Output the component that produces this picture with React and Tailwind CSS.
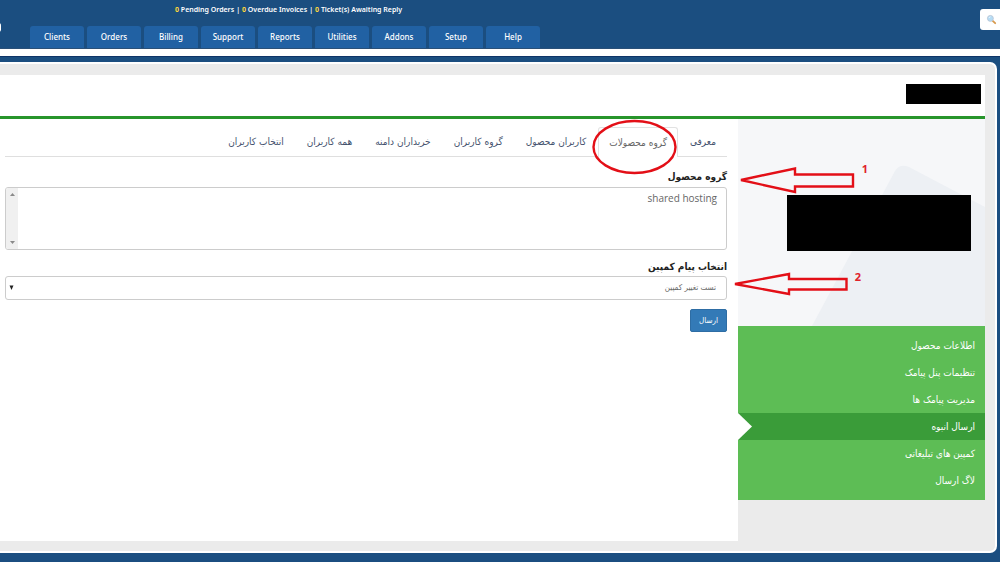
const NAV = ["Clients", "Orders", "Billing", "Support", "Reports", "Utilities", "Addons", "Setup", "Help"];

const TABS = [
  "معرفی",
  "گروه محصولات",
  "کاربران محصول",
  "گروه کاربران",
  "خریداران دامنه",
  "همه کاربران",
  "انتخاب کاربران",
];

const MENU = [
  "اطلاعات محصول",
  "تنظیمات پنل پیامک",
  "مدیریت پیامک ها",
  "ارسال انبوه",
  "کمپین های تبلیغاتی",
  "لاگ ارسال",
];

function Stat({ label }) {
  return (
    <a href="#stats" className="hover:underline">
      <span className="font-bold text-[#ffd83a]">0</span> {label}
    </a>
  );
}

function Header() {
  return (
    <header className="relative flex h-[49px] flex-col justify-between overflow-hidden border-b border-[#2a5078] bg-[#1b4e80]">
      <div className="flex gap-[2px] pl-[175px] pt-1 font-['Noto_Sans',sans-serif] text-[7px] leading-[12px] font-semibold text-white">
        <Stat label="Pending Orders" />
        <span>|</span>
        <Stat label="Overdue Invoices" />
        <span>|</span>
        <Stat label="Ticket(s) Awaiting Reply" />
      </div>
      <span className="absolute -left-1 top-[23px] h-[9px] w-[5px] rounded-full bg-white" />
      <nav className="flex gap-[3px] pl-[30px]">
        {NAV.map((item) => (
          <a
            key={item}
            href="#nav"
            className="flex h-[22px] w-[54px] items-center justify-center rounded-t-[3px] bg-[#2161a3] font-['Noto_Sans',sans-serif] text-[8px] font-medium text-white"
          >
            {item}
          </a>
        ))}
      </nav>
      <button
        type="button"
        aria-label="Search"
        className="absolute -right-1 top-[9px] flex h-[21px] w-6 items-center rounded-[3px] bg-white pl-[6px]"
      >
        <svg viewBox="0 0 12 12" className="h-[11px] w-[11px]">
          <path d="M7 7.2 10 10" stroke="#d79a4e" strokeWidth="2" strokeLinecap="round" />
          <circle cx="4.8" cy="4.8" r="3.2" fill="#b5dcf5" stroke="#b9c6d6" strokeWidth="1" />
          <path d="M3.2 4.4a2 2 0 0 1 1.6-1.3" stroke="#fff" strokeWidth=".8" fill="none" />
        </svg>
      </button>
    </header>
  );
}

function Tabs() {
  return (
    <div role="tablist" className="flex gap-px border-b border-[#dfdfdf]">
      {TABS.map((tab, i) => (
        <button
          key={tab}
          type="button"
          role="tab"
          aria-selected={i === 1}
          className={
            i === 1
              ? "-mb-px h-[30px] rounded-t-[3px] border border-b-0 border-[#e2e2e2] bg-white px-[10px] text-[10px] whitespace-nowrap text-[#666666]"
              : "h-[29px] px-[11px] text-[10px] whitespace-nowrap text-[#45526e]"
          }
        >
          {tab}
        </button>
      ))}
    </div>
  );
}

function Form() {
  return (
    <form className="flex flex-col items-start" onSubmit={(e) => e.preventDefault()}>
      <label htmlFor="group" className="mt-[13px] text-[10px] leading-[14px] font-bold text-[#222222]">
        گروه محصول
      </label>
      <div className="mt-[3px] flex h-[63px] w-full overflow-hidden rounded-[3px] border border-[#cccccc] bg-white">
        <select
          id="group"
          multiple
          className="h-full flex-1 appearance-none overflow-hidden bg-transparent py-[3px] pr-[9px] font-['Open_Sans',sans-serif] text-[10px] leading-[16px] text-[#666666] outline-none"
        >
          <option className="p-0 text-right">shared hosting</option>
        </select>
        <div className="flex w-[12px] flex-col items-center justify-between bg-[#f0f0f0] py-[5px]">
          <svg viewBox="0 0 5 3" className="h-[3px] w-[5px]"><path d="M0 3 2.5 0 5 3z" fill="#8a8a8a" /></svg>
          <svg viewBox="0 0 5 3" className="h-[3px] w-[5px]"><path d="M0 0 2.5 3 5 0z" fill="#8a8a8a" /></svg>
        </div>
      </div>
      <label htmlFor="message" className="mt-[10px] text-[10px] leading-[14px] font-bold text-[#222222]">
        انتخاب پیام کمپین
      </label>
      <div className="relative mt-[2px] w-full">
        <select
          id="message"
          className="block h-[24px] w-full appearance-none rounded-[3px] border border-[#cccccc] bg-white pr-[10px] text-[8px] text-[#666666]"
        >
          <option>تست تغییر کمپین</option>
        </select>
        <svg viewBox="0 0 5 5" className="pointer-events-none absolute left-[4px] top-[9px] h-[5px] w-[5px]">
          <path d="M.5 .5h4L2.5 5z" fill="#222" />
        </svg>
      </div>
      <button
        type="submit"
        className="mt-[9px] h-[23px] w-[37px] rounded-[2px] border border-[#2e6da4] bg-[#337ab7] text-[8px] text-white"
      >
        ارسال
      </button>
    </form>
  );
}

function Sidebar() {
  return (
    <aside className="w-[247px] shrink-0 bg-[#ebebeb]">
      <div className="relative flex h-[207px] items-center justify-center overflow-hidden bg-[#f6f7f9]">
        <svg viewBox="0 0 247 207" className="absolute inset-0 h-full w-full">
          <path d="M74 207 157 52q5-8 14-4L247 88V207z" fill="#edf0f4" />
        </svg>
        <div className="relative ml-[34px] h-[56px] w-[184px] bg-black" />
      </div>
      <nav className="bg-[#5dbd55] py-[6px]">
        {MENU.map((item, i) => (
          <a
            key={item}
            href="#menu"
            className={
              i === 3
                ? "relative flex h-[27px] items-center bg-[#3a9c39] px-[10px] text-[10px] text-white"
                : "flex h-[27px] items-center px-[10px] text-[10px] text-white"
            }
          >
            {item}
            {i === 3 && (
              <svg viewBox="0 0 14 27" className="absolute left-0 top-0 h-[27px] w-[14px]">
                <path d="M0 0 14 13.5 0 27z" fill="#fff" />
              </svg>
            )}
          </a>
        ))}
      </nav>
    </aside>
  );
}

function Annotations() {
  return (
    <div className="pointer-events-none absolute inset-0" dir="ltr">
      <svg className="absolute right-[323px] top-[119px] h-[56px] w-[85px]" viewBox="0 0 85 56" fill="none">
        <ellipse cx="42.5" cy="28" rx="41" ry="26" stroke="#e30f17" strokeWidth="2.4" />
      </svg>
      <svg className="absolute right-[144px] top-[165px] h-[30px] w-[118px]" viewBox="0 0 118 30" fill="none">
        <path d="M3 15 57 3.5V9.500H115V21.500H57V27Z" stroke="#e30f17" strokeWidth="2.4" />
      </svg>
      <svg className="absolute right-[150px] top-[269px] h-[30px] w-[118px]" viewBox="0 0 118 30" fill="none">
        <path d="M3 15 57 5V10H114.500V20.500H57V25Z" stroke="#e30f17" strokeWidth="2.4" />
      </svg>
      <span className="absolute right-[132px] top-[162px] font-['Noto_Sans',sans-serif] text-[11px] leading-[14px] font-bold text-[#e0222b]">1</span>
      <span className="absolute right-[139px] top-[270px] font-['Noto_Sans',sans-serif] text-[11px] leading-[14px] font-bold text-[#e0222b]">2</span>
    </div>
  );
}

export default function App() {
  return (
    <div className="relative min-h-screen overflow-hidden bg-[#1b4e80] font-['DejaVu_Sans_Condensed','DejaVu_Sans',sans-serif]">
      <Header />
      <div className="h-[7px] bg-white" />
      <div className="border-t border-[#0f3568] pt-[5px] pr-[3px] pb-[9px]">
        <div className="rounded-r-[7px] border-2 border-l-0 border-white bg-[#ebebeb] pt-[11px] pr-[10px] pb-[10px]">
          <div dir="rtl">
            <div className="flex h-[41px] items-center bg-white px-[4px]">
              <div className="mt-[-3px] h-[20px] w-[75px] bg-black" />
            </div>
            <div className="h-[3px] bg-[#27952b]" />
            <div className="flex">
              <Sidebar />
              <main className="min-h-[422px] min-w-0 flex-1 bg-white pt-[8px] pr-[11px] pl-[5px]">
                <Tabs />
                <Form />
              </main>
            </div>
          </div>
        </div>
      </div>
      <Annotations />
    </div>
  );
}
